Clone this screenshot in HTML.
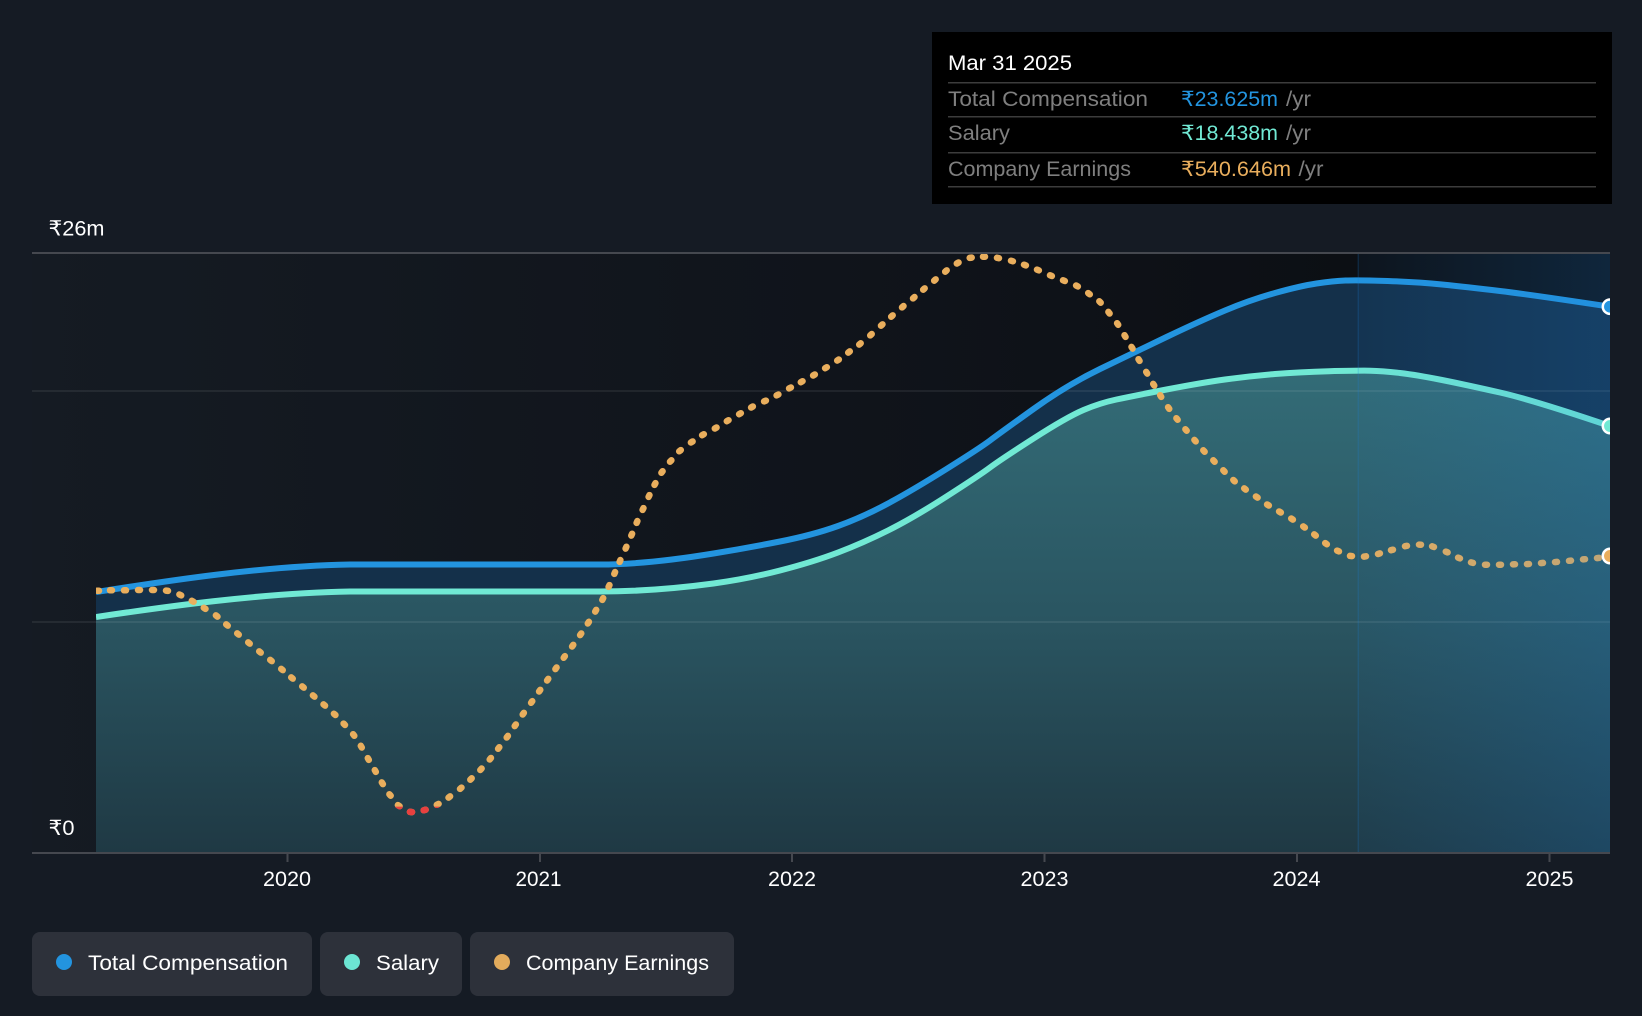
<!DOCTYPE html>
<html lang="en">
<head>
<meta charset="utf-8">
<title>Compensation chart</title>
<style>
html,body{margin:0;padding:0;background:#151b24;width:1642px;height:1016px;overflow:hidden}
svg{display:block}
text{font-family:"Liberation Sans","DejaVu Sans",sans-serif;font-size:21px;fill:#fff}
</style>
</head>
<body>
<svg width="1642" height="1016" viewBox="0 0 1642 1016" xmlns="http://www.w3.org/2000/svg">
<defs>
<linearGradient id="plot" gradientUnits="userSpaceOnUse" x1="32" y1="0" x2="1358" y2="0">
<stop offset="0" stop-color="#151b23"/><stop offset=".6" stop-color="#10141b"/><stop offset="1" stop-color="#0c0f14"/>
</linearGradient>
<linearGradient id="teal" gradientUnits="userSpaceOnUse" x1="0" y1="370" x2="0" y2="852">
<stop offset="0" stop-color="#336c77"/><stop offset=".52" stop-color="#2a5561"/><stop offset="1" stop-color="#1f3944"/>
</linearGradient>
<linearGradient id="band" gradientUnits="userSpaceOnUse" x1="1358" y1="0" x2="1610" y2="0">
<stop offset="0" stop-color="#1b82dc" stop-opacity=".05"/><stop offset="1" stop-color="#1b82dc" stop-opacity=".2"/>
</linearGradient>
<clipPath id="plotclip"><rect x="96" y="254" width="1514" height="598"/></clipPath>
<clipPath id="redclip"><rect x="300" y="806.6" width="200" height="30"/></clipPath>
<clipPath id="endclip"><rect x="1580" y="254" width="30" height="598"/></clipPath>
<path id="dots" fill="none" stroke-linecap="round" stroke-width="6.5" d="M97 590.7h2M110 590.3h2M124 590.3h2M138 590h2M152 590h2M166 590.6l2 .3M179.4 594.5l1.8 .9M191.8 600.8l1.8 1M203.8 607.8l1.7 1.1M215.9 615.4l1.6 1.2M226.2 624.4l1.55 1.25M237.2 633.4l1.55 1.25M248.2 642.4l1.55 1.25M259.2 651.4l1.55 1.25M270.2 659.9l1.55 1.25M281.2 668.9l1.55 1.25M291.2 677.4l1.55 1.25M302.2 686.4l1.55 1.25M312.9 695.4l1.55 1.25M323.5 704.4l1.55 1.25M333.9 713.7l1.55 1.3M343.6 723.6l1.4 1.4M353.1 734.2l1.2 1.6M360.8 745.8l1 1.75M367.8 758.1l1 1.75M374.8 770.1l1 1.75M381.8 782.4l1.1 1.7M389.4 794.2l1.3 1.5M397.9 805.1l1.7 1.1M410 811.9l2 .2M423.7 810.3l1.9 -.6M436.8 804.8l1.8 -.9M448.5 797.6l1.6 -1.2M460 788.9l1.5 -1.3M470.3 779.7l1.4 -1.4M480.3 770l1.35 -1.5M489.7 759.5l1.25 -1.55M498.1 748.8l1.2 -1.6M506.7 737.5l1.2 -1.6M514.7 726.1l1.15 -1.65M522.7 714.5l1.15 -1.65M531.1 702.8l1.15 -1.65M539.1 691.5l1.15 -1.65M547.1 680.5l1.15 -1.65M555.4 669.1l1.15 -1.65M563.7 657.8l1.15 -1.65M572.1 646.5l1.15 -1.65M580.1 635.1l1.15 -1.65M587.8 623.5l1.1 -1.7M595.2 611.6l1 -1.75M602.3 599.9l.9 -1.8M608.6 586.9l.85 -1.8M614.3 573.9l.8 -1.85M619.6 561.9l.8 -1.85M625.6 548.6l.8 -1.85M631.3 535.6l.8 -1.85M636.6 522.9l.8 -1.85M642.6 509.9l.85 -1.8M648.6 496.9l.85 -1.8M654.5 484.9l.95 -1.75M661.4 472.8l1.2 -1.6M670 461.7l1.4 -1.4M679.2 451.3l1.6 -1.2M690.9 442.5l1.7 -1.05M702.1 435.2l1.75 -1M714.8 428.5l1.75 -1M726.8 421.2l1.75 -1M739.1 414.2l1.75 -1M751.1 407.5l1.75 -1M764.1 401.4l1.8 -.8M776.6 395.4l1.8 -.9M789.1 388.4l1.8 -.9M800.8 382.2l1.75 -1M813.1 375.5l1.75 -1M825.1 368.2l1.75 -1M837.2 360.6l1.65 -1.1M848.2 352.6l1.6 -1.2M859.2 344.6l1.5 -1.3M870.2 335.4l1.5 -1.35M881 325.7l1.5 -1.35M891.2 316.7l1.5 -1.35M902 307.4l1.5 -1.35M913 298.4l1.5 -1.35M923.2 289.7l1.5 -1.35M934.2 280.7l1.5 -1.35M945.2 271.7l1.5 -1.35M956.8 263.5l1.75 -1M969.7 257.9l2 -.3M983 256.7h2M997 257.8l1.95 .4M1011 260.7l1.9 .6M1024 264.7l1.9 .7M1037 269.6l1.85 .75M1050 275.3l1.85 .75M1063 280.3l1.85 .75M1076.1 285.5l1.75 .95M1088.2 293.1l1.6 1.2M1099.3 301.3l1.4 1.4M1108.4 311.9l1.2 1.6M1117.1 323.2l1.1 1.65M1124.5 335.2l1.05 1.7M1131.5 346.9l1.05 1.7M1138.5 359.2l1.05 1.7M1146.2 371.9l1.05 1.7M1153.2 383.9l1.05 1.7M1160.2 395.2l1.05 1.7M1168.1 407.2l1.15 1.65M1176.4 418.2l1.25 1.55M1185.4 429.2l1.3 1.5M1194.4 439.9l1.3 1.5M1203.3 450.3l1.35 1.45M1213.3 460.3l1.35 1.45M1223.3 470.3l1.35 1.45M1233.3 480l1.45 1.4M1244.2 488.4l1.6 1.2M1255.9 496.5l1.7 1.1M1267.1 504.5l1.75 1M1279.1 511.5l1.75 1M1291.2 518.5l1.7 1.1M1303.2 526.4l1.65 1.15M1314.2 534.4l1.6 1.2M1325.2 543.1l1.65 1.15M1337.1 550.6l1.85 .8M1350 555.9l2 .2M1364 556.6l2 -.3M1378 554l1.9 -.6M1391 550.2l1.95 -.5M1405 546.2l1.95 -.35M1419 544.6l2 .1M1432.1 546.3l1.85 .7M1445.8 551.6l1.8 .8M1458.1 557.6l1.85 .75M1471 562.4l1.95 .5M1485 564.7h2M1499 564.7h2M1513 564.4l2 -.1M1527 564.1l2 -.1M1541 563.1l2 -.2M1555 562.1l2 -.2M1569 560.8l2 -.2M1583 559.4l2 -.2M1597 558.1l2 -.2"/>
</defs>

<rect width="1642" height="1016" fill="#151b24"/>
<rect x="32" y="254" width="1578" height="598" fill="url(#plot)"/>

<g clip-path="url(#plotclip)">
<path fill="#14304a" d="M96 592C160 582 260 566 350 564.5L600 564.5C640 564.5 680 559 713.5 553.5Q747 548 780 541.5Q813 535 838 526Q863 517 888 503.5Q913 490 946.5 469Q980 448 990 440.5Q1000 433 1033.5 409Q1067 385 1100 369Q1133 353 1166.5 337Q1200 321 1225 310.5Q1250 300 1275 293Q1300 286 1316.5 283.5Q1333 281 1345.5 280.5Q1358 280 1387.5 281Q1417 282 1442 284.5Q1467 287 1500 291Q1533 295 1610 306.7L1610 852L96 852Z"/>
<path fill="url(#teal)" d="M96 617C160 607.5 260 593 350 591.5L600 591.5C640 591.5 680 588 713.5 583.5Q747 579 780 570.5Q813 562 838 552.5Q863 543 888 530.5Q913 518 946.5 496.5Q980 475 990 467.5Q1000 460 1033.5 438.5Q1067 417 1083.5 410Q1100 403 1116.5 399.5Q1133 396 1166.5 389.5Q1200 383 1225 379.5Q1250 376 1275 374Q1300 372 1329 371.2Q1358 370.5 1370.5 370.7Q1383 371 1400 373Q1417 375 1442 380Q1467 385 1500 392.5Q1533 400 1610 426L1610 852L96 852Z"/>
</g>

<rect x="32" y="390" width="1578" height="2" fill="#fff" fill-opacity=".07"/>
<rect x="32" y="621" width="1578" height="2" fill="#fff" fill-opacity=".07"/>

<g clip-path="url(#plotclip)">
<path fill="none" stroke="#2394df" stroke-width="6" d="M96 592C160 582 260 566 350 564.5L600 564.5C640 564.5 680 559 713.5 553.5Q747 548 780 541.5Q813 535 838 526Q863 517 888 503.5Q913 490 946.5 469Q980 448 990 440.5Q1000 433 1033.5 409Q1067 385 1100 369Q1133 353 1166.5 337Q1200 321 1225 310.5Q1250 300 1275 293Q1300 286 1316.5 283.5Q1333 281 1345.5 280.5Q1358 280 1387.5 281Q1417 282 1442 284.5Q1467 287 1500 291Q1533 295 1610 306.7"/>
<path fill="none" stroke="#71e9d4" stroke-width="6" d="M96 617C160 607.5 260 593 350 591.5L600 591.5C640 591.5 680 588 713.5 583.5Q747 579 780 570.5Q813 562 838 552.5Q863 543 888 530.5Q913 518 946.5 496.5Q980 475 990 467.5Q1000 460 1033.5 438.5Q1067 417 1083.5 410Q1100 403 1116.5 399.5Q1133 396 1166.5 389.5Q1200 383 1225 379.5Q1250 376 1275 374Q1300 372 1329 371.2Q1358 370.5 1370.5 370.7Q1383 371 1400 373Q1417 375 1442 380Q1467 385 1500 392.5Q1533 400 1610 426"/>
<use href="#dots" stroke="#e9ae5d"/>
<g clip-path="url(#redclip)"><use href="#dots" stroke="#e8403f"/></g>
</g>

<rect x="1358" y="254" width="252" height="598" fill="url(#band)"/>
<rect x="1357.5" y="254" width="1.5" height="598" fill="#1b82dc" fill-opacity=".18"/>

<g clip-path="url(#endclip)" stroke="#fff" stroke-width="2.5">
<circle cx="1610" cy="306.7" r="7.2" fill="#2394df"/>
<circle cx="1610" cy="426" r="7.2" fill="#71e9d4"/>
<circle cx="1610" cy="556" r="7.2" fill="#e9ae5d"/>
</g>

<rect x="32" y="252" width="1578" height="2" fill="#45484f"/>
<rect x="32" y="852" width="1578" height="2" fill="#45484f"/>
<g fill="#45484f">
<rect x="286.5" y="854" width="2" height="8"/>
<rect x="539" y="854" width="2" height="8"/>
<rect x="791" y="854" width="2" height="8"/>
<rect x="1043.5" y="854" width="2" height="8"/>
<rect x="1296" y="854" width="2" height="8"/>
<rect x="1548.5" y="854" width="2" height="8"/>
</g>

<text x="48.5" y="235.5" textLength="56" lengthAdjust="spacingAndGlyphs">₹26m</text>
<text x="48.5" y="835" textLength="26" lengthAdjust="spacingAndGlyphs">₹0</text>

<text x="263" y="886" textLength="48" lengthAdjust="spacingAndGlyphs">2020</text>
<text x="515.5" y="886" textLength="46" lengthAdjust="spacingAndGlyphs">2021</text>
<text x="768" y="886" textLength="48" lengthAdjust="spacingAndGlyphs">2022</text>
<text x="1020.5" y="886" textLength="48" lengthAdjust="spacingAndGlyphs">2023</text>
<text x="1272.5" y="886" textLength="48" lengthAdjust="spacingAndGlyphs">2024</text>
<text x="1525.5" y="886" textLength="48" lengthAdjust="spacingAndGlyphs">2025</text>

<rect x="932" y="32" width="680" height="172" fill="#000"/>
<g fill="#3c3c3c">
<rect x="948" y="82" width="648" height="1.5"/>
<rect x="948" y="116" width="648" height="1.5"/>
<rect x="948" y="152" width="648" height="1.5"/>
<rect x="948" y="186" width="648" height="1.5"/>
</g>
<text x="948" y="70" textLength="124" lengthAdjust="spacingAndGlyphs">Mar 31 2025</text>
<text x="948" y="106" textLength="200" lengthAdjust="spacingAndGlyphs" style="fill:#7f7f7f">Total Compensation</text>
<text x="1181" y="106" textLength="97" lengthAdjust="spacingAndGlyphs" style="fill:#2394df">₹23.625m</text>
<text x="1286" y="106" textLength="25" lengthAdjust="spacingAndGlyphs" style="fill:#7f7f7f">/yr</text>
<text x="948" y="140" textLength="62" lengthAdjust="spacingAndGlyphs" style="fill:#7f7f7f">Salary</text>
<text x="1181" y="140" textLength="97" lengthAdjust="spacingAndGlyphs" style="fill:#71e9d4">₹18.438m</text>
<text x="1286" y="140" textLength="25" lengthAdjust="spacingAndGlyphs" style="fill:#7f7f7f">/yr</text>
<text x="948" y="176" textLength="183" lengthAdjust="spacingAndGlyphs" style="fill:#7f7f7f">Company Earnings</text>
<text x="1181" y="176" textLength="110" lengthAdjust="spacingAndGlyphs" style="fill:#e9ae5d">₹540.646m</text>
<text x="1298.5" y="176" textLength="25" lengthAdjust="spacingAndGlyphs" style="fill:#7f7f7f">/yr</text>

<rect x="32" y="932" width="280" height="64" rx="8" fill="#2d313a"/>
<rect x="320" y="932" width="142" height="64" rx="8" fill="#2d313a"/>
<rect x="470" y="932" width="264" height="64" rx="8" fill="#2d313a"/>
<circle cx="64" cy="962" r="8" fill="#2394df"/>
<circle cx="352" cy="962" r="8" fill="#6ce5d3"/>
<circle cx="502" cy="962" r="8" fill="#e2ab5c"/>
<text x="88" y="970" textLength="200" lengthAdjust="spacingAndGlyphs">Total Compensation</text>
<text x="376" y="970" textLength="63" lengthAdjust="spacingAndGlyphs">Salary</text>
<text x="526" y="970" textLength="183" lengthAdjust="spacingAndGlyphs">Company Earnings</text>
</svg>
</body>
</html>
